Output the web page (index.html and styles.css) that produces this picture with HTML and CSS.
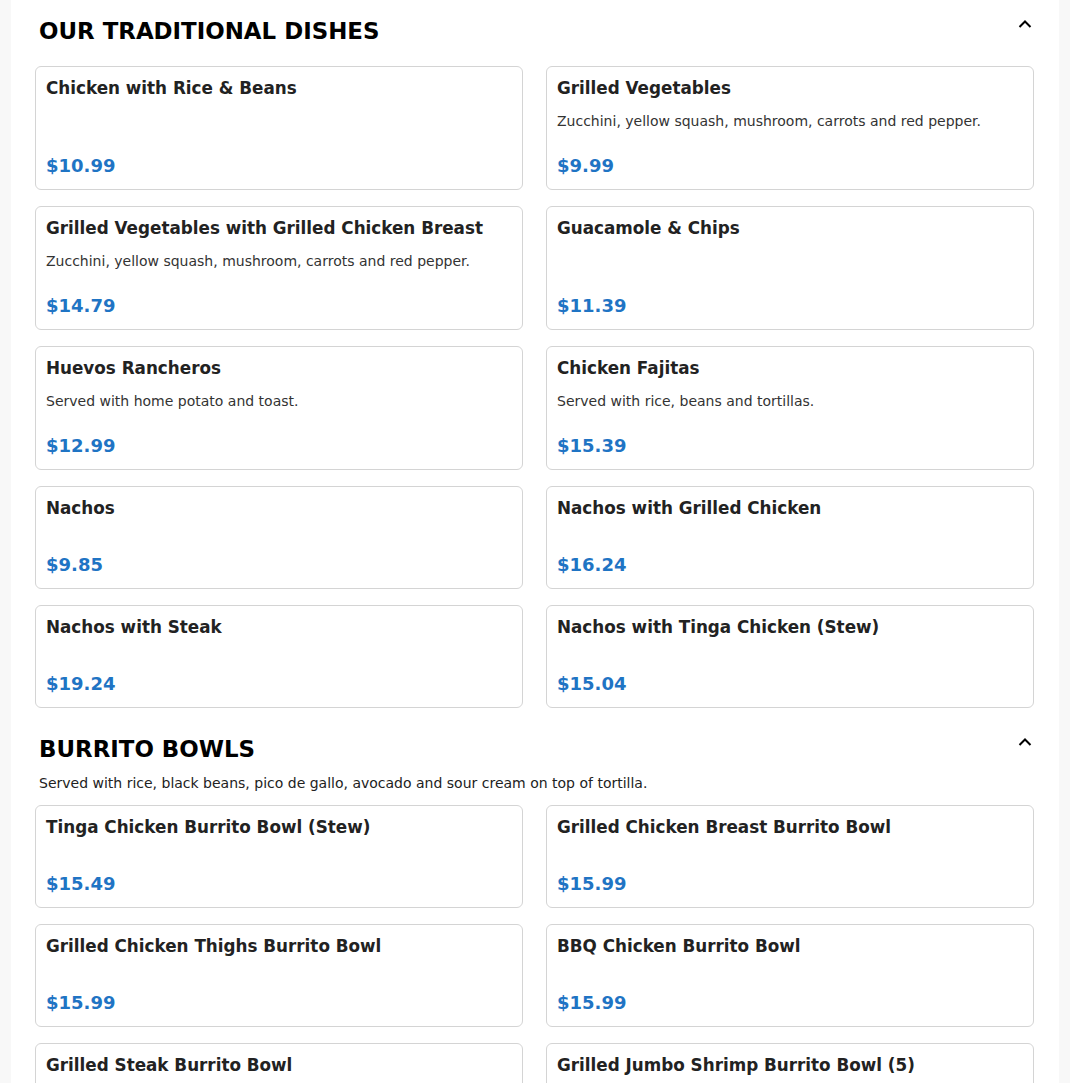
FILE: index.html
```html
<!DOCTYPE html>
<html lang="en">
<head>
<meta charset="utf-8">
<title>Menu</title>
<link rel="stylesheet" href="styles.css">
</head>
<body>
<main class="menu">
  <section class="section">
    <div class="section-head">
      <h2 class="section-title">OUR TRADITIONAL DISHES</h2>
      <svg class="chevron" width="16" height="16" viewBox="0 0 16 16"><path d="M2.5 11 L8 5.5 L13.5 11" fill="none" stroke="#000" stroke-width="2"/></svg>
    </div>
    <div class="grid">
      <div class="card"><div class="card-title">Chicken with Rice &amp; Beans</div><div class="price">$10.99</div></div>
      <div class="card"><div class="card-title">Grilled Vegetables</div><div class="card-desc">Zucchini, yellow squash, mushroom, carrots and red pepper.</div><div class="price">$9.99</div></div>
      <div class="card"><div class="card-title">Grilled Vegetables with Grilled Chicken Breast</div><div class="card-desc">Zucchini, yellow squash, mushroom, carrots and red pepper.</div><div class="price">$14.79</div></div>
      <div class="card"><div class="card-title">Guacamole &amp; Chips</div><div class="price">$11.39</div></div>
      <div class="card"><div class="card-title">Huevos Rancheros</div><div class="card-desc">Served with home potato and toast.</div><div class="price">$12.99</div></div>
      <div class="card"><div class="card-title">Chicken Fajitas</div><div class="card-desc">Served with rice, beans and tortillas.</div><div class="price">$15.39</div></div>
      <div class="card"><div class="card-title">Nachos</div><div class="price">$9.85</div></div>
      <div class="card"><div class="card-title">Nachos with Grilled Chicken</div><div class="price">$16.24</div></div>
      <div class="card"><div class="card-title">Nachos with Steak</div><div class="price">$19.24</div></div>
      <div class="card"><div class="card-title">Nachos with Tinga Chicken (Stew)</div><div class="price">$15.04</div></div>
    </div>
  </section>
  <section class="section">
    <div class="section-head">
      <h2 class="section-title">BURRITO BOWLS</h2>
      <svg class="chevron" width="16" height="16" viewBox="0 0 16 16"><path d="M2.5 11 L8 5.5 L13.5 11" fill="none" stroke="#000" stroke-width="2"/></svg>
    </div>
    <p class="section-sub">Served with rice, black beans, pico de gallo, avocado and sour cream on top of tortilla.</p>
    <div class="grid">
      <div class="card"><div class="card-title">Tinga Chicken Burrito Bowl (Stew)</div><div class="price">$15.49</div></div>
      <div class="card"><div class="card-title">Grilled Chicken Breast Burrito Bowl</div><div class="price">$15.99</div></div>
      <div class="card"><div class="card-title">Grilled Chicken Thighs Burrito Bowl</div><div class="price">$15.99</div></div>
      <div class="card"><div class="card-title">BBQ Chicken Burrito Bowl</div><div class="price">$15.99</div></div>
      <div class="card"><div class="card-title">Grilled Steak Burrito Bowl</div><div class="price">$15.99</div></div>
      <div class="card"><div class="card-title">Grilled Jumbo Shrimp Burrito Bowl (5)</div><div class="price">$17.99</div></div>
    </div>
  </section>
</main>
</body>
</html>
```

FILE: styles.css
```css
html, body {
  margin: 0;
  padding: 0;
  background: #f8f8f8;
  font-family: "DejaVu Sans", sans-serif;
  color: #222;
}
.menu {
  margin: 0 11px;
  background: #fff;
  min-height: 1083px;
}
.section {
  padding: 17px 25px 10px 24px;
}
.section-head {
  display: flex;
  justify-content: space-between;
  align-items: flex-start;
  padding: 0 1px 9px 4px;
}
.section-title {
  margin: 0;
  font-size: 22.9px;
  line-height: 29px;
  font-weight: bold;
  color: #000;
}
.chevron {
  display: block;
  margin-top: -1px;
}
.section-sub {
  margin: 0;
  padding: 0 4px;
  font-size: 14px;
  line-height: 21px;
  color: #222;
}
.grid {
  margin-top: 11px;
  display: grid;
  grid-template-columns: 1fr 1fr;
  column-gap: 23px;
  row-gap: 16px;
}
.card {
  border: 1px solid #d4d4d4;
  border-radius: 6px;
  padding: 10px 10px 12px 10px;
  display: flex;
  flex-direction: column;
}
.card-title {
  font-size: 16.8px;
  line-height: 22px;
  font-weight: bold;
  color: #222;
  margin-bottom: 12px;
}
.card-desc {
  font-size: 14px;
  line-height: 21px;
  color: #333;
}
.price {
  margin-top: auto;
  padding-top: 23px;
  font-size: 18px;
  line-height: 22px;
  font-weight: bold;
  color: #1f74c4;
}
```
